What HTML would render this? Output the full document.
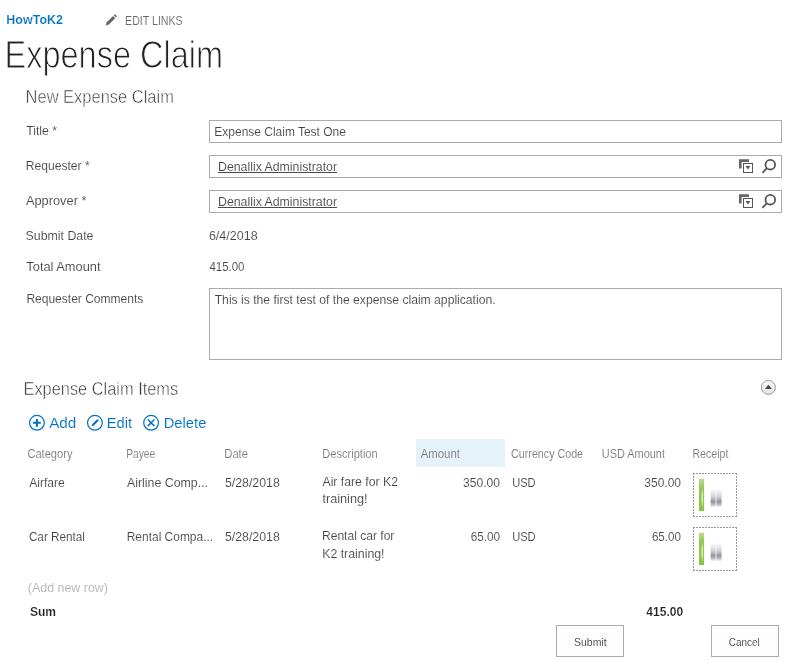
<!DOCTYPE html>
<html><head><meta charset="utf-8"><title>Expense Claim</title>
<style>
html,body{margin:0;padding:0;background:#fff;}
body{width:789px;height:666px;position:relative;overflow:hidden;font-family:"Liberation Sans", sans-serif;}
.t{position:absolute;white-space:pre;font-family:"Liberation Sans", sans-serif;transform-origin:0 0;}
.b{position:absolute;box-sizing:border-box;}
svg{position:absolute;overflow:visible;}
.g{filter:grayscale(1);}
</style></head><body>
<!-- inputs -->
<div class="b" style="left:209px;top:120px;width:573px;height:23px;border:1px solid #ababab;"></div>
<div class="b" style="left:209px;top:155px;width:573px;height:23px;border:1px solid #ababab;"></div>
<div class="b" style="left:209px;top:190px;width:573px;height:23px;border:1px solid #ababab;"></div>
<div class="b" style="left:209px;top:288px;width:573px;height:72px;border:1px solid #ababab;"></div>
<!-- amount header highlight -->
<div class="b" style="left:416px;top:439px;width:89px;height:28px;background:#e6f2fa;"></div>
<!-- buttons -->
<div class="b" style="left:556px;top:625px;width:68px;height:32px;border:1px solid #ababab;background:#fdfdfd;"></div>
<div class="b" style="left:711px;top:625px;width:68px;height:32px;border:1px solid #ababab;background:#fdfdfd;"></div>
<!-- pencil (edit links) -->
<svg style="left:105.4px;top:13.6px" width="12.2" height="12.2" viewBox="0 0 13 13">
  <path d="M0.8 12.2 L1.8 8.9 L8.6 2.1 L10.9 4.4 L4.1 11.2 Z" fill="#666"/>
  <path d="M9.3 1.4 L10.1 0.6 Q10.6 0.2 11.1 0.6 L12.4 1.9 Q12.8 2.4 12.4 2.9 L11.6 3.7 Z" fill="#666"/>
</svg>
<!-- people picker icons -->
<svg style="left:739px;top:159px" width="38" height="15" viewBox="0 0 38 15">
  <path d="M0 0.3 H10 V3 H2.6 V9.5 H0 Z" fill="#666"/>
  <rect x="4.5" y="4.5" width="9" height="9" fill="#fff" stroke="#555" stroke-width="1"/>
  <path d="M6.5 7.1 H11.3 L8.9 10.4 Z" fill="#555"/>
  <circle cx="31.3" cy="5.7" r="4.8" fill="none" stroke="#555" stroke-width="1.8"/>
  <path d="M27.9 9.2 L23.4 13.8" stroke="#555" stroke-width="1.8" stroke-linecap="butt"/>
</svg>
<svg style="left:739px;top:194px" width="38" height="15" viewBox="0 0 38 15">
  <path d="M0 0.3 H10 V3 H2.6 V9.5 H0 Z" fill="#666"/>
  <rect x="4.5" y="4.5" width="9" height="9" fill="#fff" stroke="#555" stroke-width="1"/>
  <path d="M6.5 7.1 H11.3 L8.9 10.4 Z" fill="#555"/>
  <circle cx="31.3" cy="5.7" r="4.8" fill="none" stroke="#555" stroke-width="1.8"/>
  <path d="M27.9 9.2 L23.4 13.8" stroke="#555" stroke-width="1.8" stroke-linecap="butt"/>
</svg>
<!-- collapse icon -->
<svg style="left:760px;top:379px" width="17" height="17" viewBox="0 0 17 17">
  <defs><linearGradient id="cg" x1="0" y1="0" x2="0" y2="1"><stop offset="0" stop-color="#f8f8f8"/><stop offset="1" stop-color="#e2e2e6"/></linearGradient></defs>
  <circle cx="8.4" cy="8.4" r="7" fill="url(#cg)" stroke="#9a9a9a" stroke-width="1"/>
  <path d="M4.9 10.1 H11.9 L8.4 5.7 Z" fill="#444"/>
</svg>
<!-- toolbar icons -->
<svg style="left:28px;top:414px" width="18" height="18" viewBox="0 0 18 18">
  <circle cx="8.9" cy="8.8" r="7.4" fill="none" stroke="#0072c6" stroke-width="1.2"/>
  <path d="M5 8.8 H12.8 M8.9 4.9 V12.7" stroke="#0072c6" stroke-width="2.1"/>
</svg>
<svg style="left:86px;top:414px" width="18" height="18" viewBox="0 0 18 18">
  <circle cx="8.9" cy="8.8" r="7.4" fill="none" stroke="#0072c6" stroke-width="1.2"/>
  <path d="M5.6 12.2 L6.3 10 L10.9 5.4 Q11.5 4.9 12.1 5.4 L12.4 5.7 Q12.9 6.3 12.4 6.9 L7.8 11.5 Z" fill="#0072c6"/>
</svg>
<svg style="left:142px;top:414px" width="18" height="18" viewBox="0 0 18 18">
  <circle cx="9.1" cy="8.8" r="7.4" fill="none" stroke="#0072c6" stroke-width="1.2"/>
  <path d="M5.8 5.5 L12.4 12.1 M12.4 5.5 L5.8 12.1" stroke="#0072c6" stroke-width="1.5"/>
</svg>
<!-- receipts -->
<svg style="left:693px;top:473px" width="44" height="44" viewBox="0 0 44 44">
  <defs>
    <linearGradient id="gg" x1="0" y1="0" x2="0" y2="1"><stop offset="0" stop-color="#bcdc92"/><stop offset="0.3" stop-color="#93c651"/><stop offset="1" stop-color="#8cc345"/></linearGradient>
    <linearGradient id="gb" x1="0" y1="0" x2="0" y2="1"><stop offset="0" stop-color="#787886" stop-opacity="0"/><stop offset="0.4" stop-color="#787886" stop-opacity="0.32"/><stop offset="0.68" stop-color="#62626f" stop-opacity="0.68"/><stop offset="0.82" stop-color="#6c6c7a" stop-opacity="0.5"/><stop offset="1" stop-color="#787886" stop-opacity="0"/></linearGradient>
    <filter id="bl" x="-50%" y="-20%" width="200%" height="140%"><feGaussianBlur stdDeviation="0.7 0.3"/></filter>
    <filter id="bl2" x="-100%" y="-20%" width="300%" height="140%"><feGaussianBlur stdDeviation="0.5 1.5"/></filter>
  </defs>
  <path d="M0 0.5 H44 M0 43.5 H44 M0.5 0 V44 M43.5 0 V44" fill="none" stroke="#989898" stroke-width="1" stroke-dasharray="2 1" shape-rendering="crispEdges"/>
  <rect x="6" y="5.8" width="5.1" height="32.3" fill="url(#gg)"/>
  <ellipse cx="9.2" cy="25" rx="0.6" ry="8" fill="#f4fae8" filter="url(#bl2)"/>
  <g filter="url(#bl)"><rect x="17.6" y="16" width="5" height="18.5" fill="url(#gb)"/><rect x="23.4" y="16" width="5.2" height="18.5" fill="url(#gb)"/></g>
</svg>
<svg style="left:693px;top:527px" width="44" height="44" viewBox="0 0 44 44">
  <path d="M0 0.5 H44 M0 43.5 H44 M0.5 0 V44 M43.5 0 V44" fill="none" stroke="#989898" stroke-width="1" stroke-dasharray="2 1" shape-rendering="crispEdges"/>
  <rect x="6" y="5.8" width="5.1" height="32.3" fill="url(#gg)"/>
  <ellipse cx="9.2" cy="25" rx="0.6" ry="8" fill="#f4fae8" filter="url(#bl2)"/>
  <g filter="url(#bl)"><rect x="17.6" y="16" width="5" height="18.5" fill="url(#gb)"/><rect x="23.4" y="16" width="5.2" height="18.5" fill="url(#gb)"/></g>
</svg>
<!-- underlines -->
<div class="b" style="left:218px;top:172px;width:119px;height:1px;background:#4a4a4a;"></div>
<div class="b" style="left:218px;top:207px;width:119px;height:1px;background:#4a4a4a;"></div>

<div class="g">
<span class="t" style="left:125px;top:13.12px;font-size:12.2px;line-height:16px;color:#666;letter-spacing:0.000px;-webkit-text-stroke:0.1px #fff;transform:translateX(0.08px) scaleX(0.8709);">EDIT LINKS</span>
<span class="t" style="left:4px;top:29.81px;font-size:38.5px;line-height:50px;color:#222;letter-spacing:0.000px;-webkit-text-stroke:1.0px #fff;transform:translateX(0.53px) scaleX(0.8441);">Expense Claim</span>
<span class="t" style="left:25px;top:86.19px;font-size:17.5px;line-height:23px;color:#3a3a3a;letter-spacing:0.000px;-webkit-text-stroke:0.45px #fff;transform:translateX(0.58px) scaleX(0.9412);">New Expense Claim</span>
<span class="t" style="left:26px;top:122.00px;font-size:13px;line-height:17px;color:#444;letter-spacing:0.000px;-webkit-text-stroke:0.1px #fff;transform:translateX(0.16px) scaleX(0.9459);">Title *</span>
<span class="t" style="left:25px;top:157.00px;font-size:13px;line-height:17px;color:#444;letter-spacing:0.000px;-webkit-text-stroke:0.1px #fff;transform:translateX(0.79px) scaleX(0.9299);">Requester *</span>
<span class="t" style="left:25px;top:192.00px;font-size:13px;line-height:17px;color:#444;letter-spacing:0.000px;-webkit-text-stroke:0.1px #fff;transform:translateX(0.91px) scaleX(0.9857);">Approver *</span>
<span class="t" style="left:25px;top:227.00px;font-size:13px;line-height:17px;color:#444;letter-spacing:0.000px;-webkit-text-stroke:0.1px #fff;transform:translateX(0.52px) scaleX(0.9500);">Submit Date</span>
<span class="t" style="left:26px;top:258.00px;font-size:13px;line-height:17px;color:#444;letter-spacing:0.000px;-webkit-text-stroke:0.1px #fff;transform:translateX(0.33px) scaleX(0.9875);">Total Amount</span>
<span class="t" style="left:26px;top:290.00px;font-size:13px;line-height:17px;color:#444;letter-spacing:0.000px;-webkit-text-stroke:0.1px #fff;transform:translateX(0.38px) scaleX(0.9246);">Requester Comments</span>
<span class="t" style="left:214px;top:123.00px;font-size:13px;line-height:17px;color:#444;letter-spacing:0.000px;-webkit-text-stroke:0.1px #fff;transform:translateX(0.36px) scaleX(0.9208);">Expense Claim Test One</span>
<span class="t" style="left:218px;top:158.00px;font-size:13px;line-height:17px;color:#444;letter-spacing:0.000px;-webkit-text-stroke:0.1px #fff;transform:translateX(0.04px) scaleX(0.9465);">Denallix Administrator</span>
<span class="t" style="left:218px;top:193.00px;font-size:13px;line-height:17px;color:#444;letter-spacing:0.000px;-webkit-text-stroke:0.1px #fff;transform:translateX(0.04px) scaleX(0.9465);">Denallix Administrator</span>
<span class="t" style="left:208px;top:227.00px;font-size:13px;line-height:17px;color:#444;letter-spacing:0.000px;-webkit-text-stroke:0.1px #fff;transform:translateX(0.89px) scaleX(0.9628);">6/4/2018</span>
<span class="t" style="left:209px;top:258.00px;font-size:13px;line-height:17px;color:#444;letter-spacing:0.000px;-webkit-text-stroke:0.1px #fff;transform:translateX(0.43px) scaleX(0.8812);">415.00</span>
<span class="t" style="left:214px;top:291.00px;font-size:13px;line-height:17px;color:#444;letter-spacing:0.000px;-webkit-text-stroke:0.1px #fff;transform:translateX(0.70px) scaleX(0.9344);">This is the first test of the expense claim application.</span>
<span class="t" style="left:23px;top:378.11px;font-size:18px;line-height:23px;color:#3a3a3a;letter-spacing:0.000px;-webkit-text-stroke:0.45px #fff;transform:translateX(0.47px) scaleX(0.9098);">Expense Claim Items</span>
<span class="t" style="left:27px;top:446.09px;font-size:12px;line-height:16px;color:#777;letter-spacing:0.000px;-webkit-text-stroke:0.1px #fff;transform:translateX(0.41px) scaleX(0.9247);">Category</span>
<span class="t" style="left:126px;top:446.09px;font-size:12px;line-height:16px;color:#777;letter-spacing:0.000px;-webkit-text-stroke:0.1px #fff;transform:translateX(0.14px) scaleX(0.8518);">Payee</span>
<span class="t" style="left:224px;top:446.09px;font-size:12px;line-height:16px;color:#777;letter-spacing:0.000px;-webkit-text-stroke:0.1px #fff;transform:translateX(0.28px) scaleX(0.9351);">Date</span>
<span class="t" style="left:322px;top:446.09px;font-size:12px;line-height:16px;color:#777;letter-spacing:0.000px;-webkit-text-stroke:0.1px #fff;transform:translateX(0.27px) scaleX(0.9233);">Description</span>
<span class="t" style="left:420px;top:446.09px;font-size:12px;line-height:16px;color:#777;letter-spacing:0.000px;-webkit-text-stroke:0.1px #e6f2fa;transform:translateX(0.63px) scaleX(0.9499);">Amount</span>
<span class="t" style="left:511px;top:446.09px;font-size:12px;line-height:16px;color:#777;letter-spacing:0.000px;-webkit-text-stroke:0.1px #fff;transform:translateX(0.09px) scaleX(0.8919);">Currency Code</span>
<span class="t" style="left:601px;top:446.09px;font-size:12px;line-height:16px;color:#777;letter-spacing:0.000px;-webkit-text-stroke:0.1px #fff;transform:translateX(0.80px) scaleX(0.9104);">USD Amount</span>
<span class="t" style="left:692px;top:446.09px;font-size:12px;line-height:16px;color:#777;letter-spacing:0.000px;-webkit-text-stroke:0.1px #fff;transform:translateX(0.41px) scaleX(0.8828);">Receipt</span>
<span class="t" style="left:29px;top:474.00px;font-size:13px;line-height:17px;color:#444;letter-spacing:0.000px;-webkit-text-stroke:0.1px #fff;transform:translateX(0.14px) scaleX(0.9323);">Airfare</span>
<span class="t" style="left:126px;top:474.00px;font-size:13px;line-height:17px;color:#444;letter-spacing:0.000px;-webkit-text-stroke:0.1px #fff;transform:translateX(0.98px) scaleX(0.9498);">Airline Comp...</span>
<span class="t" style="left:224px;top:474.00px;font-size:13px;line-height:17px;color:#444;letter-spacing:0.000px;-webkit-text-stroke:0.1px #fff;transform:translateX(0.90px) scaleX(0.9496);">5/28/2018</span>
<span class="t" style="left:322px;top:473.00px;font-size:13px;line-height:17px;color:#444;letter-spacing:0.000px;-webkit-text-stroke:0.1px #fff;transform:translateX(0.47px) scaleX(0.9416);">Air fare for K2</span>
<span class="t" style="left:322px;top:490.00px;font-size:13px;line-height:17px;color:#444;letter-spacing:0.000px;-webkit-text-stroke:0.1px #fff;transform:translateX(0.43px) scaleX(0.9765);">training!</span>
<span class="t" style="left:462px;top:474.00px;font-size:13px;line-height:17px;color:#444;letter-spacing:0.000px;-webkit-text-stroke:0.1px #fff;transform:translateX(0.93px) scaleX(0.9314);">350.00</span>
<span class="t" style="left:512px;top:474.00px;font-size:13px;line-height:17px;color:#444;letter-spacing:0.000px;-webkit-text-stroke:0.1px #fff;transform:translateX(0.14px) scaleX(0.8567);">USD</span>
<span class="t" style="left:644px;top:474.00px;font-size:13px;line-height:17px;color:#444;letter-spacing:0.000px;-webkit-text-stroke:0.1px #fff;transform:translateX(0.30px) scaleX(0.9221);">350.00</span>
<span class="t" style="left:28px;top:528.00px;font-size:13px;line-height:17px;color:#444;letter-spacing:0.000px;-webkit-text-stroke:0.1px #fff;transform:translateX(0.90px) scaleX(0.9020);">Car Rental</span>
<span class="t" style="left:126px;top:528.00px;font-size:13px;line-height:17px;color:#444;letter-spacing:0.000px;-webkit-text-stroke:0.1px #fff;transform:translateX(0.71px) scaleX(0.9202);">Rental Compa...</span>
<span class="t" style="left:224px;top:528.00px;font-size:13px;line-height:17px;color:#444;letter-spacing:0.000px;-webkit-text-stroke:0.1px #fff;transform:translateX(0.90px) scaleX(0.9496);">5/28/2018</span>
<span class="t" style="left:321px;top:527.00px;font-size:13px;line-height:17px;color:#444;letter-spacing:0.000px;-webkit-text-stroke:0.1px #fff;transform:translateX(0.98px) scaleX(0.9279);">Rental car for</span>
<span class="t" style="left:322px;top:545.00px;font-size:13px;line-height:17px;color:#444;letter-spacing:0.000px;-webkit-text-stroke:0.1px #fff;transform:translateX(0.16px) scaleX(0.9483);">K2 training!</span>
<span class="t" style="left:470px;top:528.00px;font-size:13px;line-height:17px;color:#444;letter-spacing:0.000px;-webkit-text-stroke:0.1px #fff;transform:translateX(0.63px) scaleX(0.9064);">65.00</span>
<span class="t" style="left:512px;top:528.00px;font-size:13px;line-height:17px;color:#444;letter-spacing:0.000px;-webkit-text-stroke:0.1px #fff;transform:translateX(0.14px) scaleX(0.8567);">USD</span>
<span class="t" style="left:651px;top:528.00px;font-size:13px;line-height:17px;color:#444;letter-spacing:0.000px;-webkit-text-stroke:0.1px #fff;transform:translateX(0.90px) scaleX(0.8952);">65.00</span>
<span class="t" style="left:27px;top:579.00px;font-size:13px;line-height:17px;color:#b1b1b1;letter-spacing:0.000px;-webkit-text-stroke:0.1px #fff;transform:translateX(0.85px) scaleX(0.9554);">(Add new row)</span>
<span class="t" style="left:29px;top:603.18px;font-size:13.2px;line-height:17px;color:#222;letter-spacing:0.000px;font-weight:700;-webkit-text-stroke:0.15px #fff;transform:translateX(0.89px) scaleX(0.9117);">Sum</span>
<span class="t" style="left:646px;top:603.18px;font-size:13.2px;line-height:17px;color:#222;letter-spacing:0.000px;font-weight:700;-webkit-text-stroke:0.15px #fff;transform:translateX(0.36px) scaleX(0.9129);">415.00</span>
<span class="t" style="left:574px;top:634.23px;font-size:11.6px;line-height:15px;color:#3a3a3a;letter-spacing:0.000px;-webkit-text-stroke:0.1px #fff;transform:translateX(0.05px) scaleX(0.9021);">Submit</span>
<span class="t" style="left:728px;top:634.23px;font-size:11.6px;line-height:15px;color:#3a3a3a;letter-spacing:0.000px;-webkit-text-stroke:0.1px #fff;transform:translateX(0.77px) scaleX(0.8585);">Cancel</span>
</div>
<span class="t" style="left:6px;top:12.02px;font-size:12.2px;line-height:16px;color:#0072c6;letter-spacing:0.000px;font-weight:700;-webkit-text-stroke:0.15px #fff;transform:translateX(0.37px) scaleX(1.0231);">HowToK2</span>
<span class="t" style="left:49px;top:413.10px;font-size:15.3px;line-height:20px;color:#0072c6;letter-spacing:0.000px;-webkit-text-stroke:0.1px #fff;transform:translateX(0.21px) scaleX(0.9957);">Add</span>
<span class="t" style="left:106px;top:413.10px;font-size:15.3px;line-height:20px;color:#0072c6;letter-spacing:0.000px;-webkit-text-stroke:0.1px #fff;transform:translateX(0.87px) scaleX(0.9550);">Edit</span>
<span class="t" style="left:163px;top:413.10px;font-size:15.3px;line-height:20px;color:#0072c6;letter-spacing:0.000px;-webkit-text-stroke:0.1px #fff;transform:translateX(0.63px) scaleX(0.9663);">Delete</span>
</body></html>
